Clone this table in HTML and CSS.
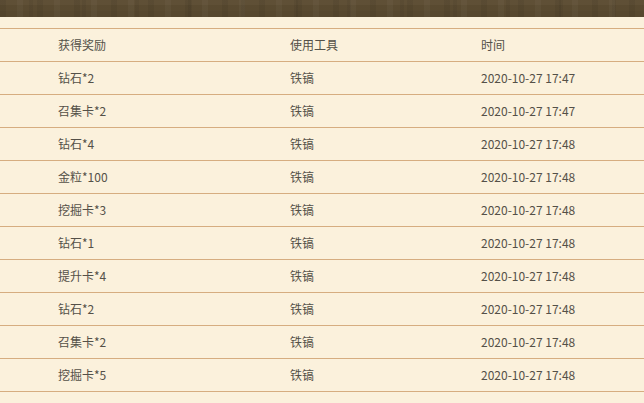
FILE: index.html
```html
<!DOCTYPE html>
<html lang="zh">
<head>
<meta charset="utf-8">
<link rel="stylesheet" href="styles.css">
</head>
<body>
<div class="banner"></div>
<div class="table">
  <div class="row head"><span>获得奖励</span><span>使用工具</span><span>时间</span></div>
  <div class="row"><span>钻石*2</span><span>铁镐</span><span>2020-10-27 17:47</span></div>
  <div class="row"><span>召集卡*2</span><span>铁镐</span><span>2020-10-27 17:47</span></div>
  <div class="row"><span>钻石*4</span><span>铁镐</span><span>2020-10-27 17:48</span></div>
  <div class="row"><span>金粒*100</span><span>铁镐</span><span>2020-10-27 17:48</span></div>
  <div class="row"><span>挖掘卡*3</span><span>铁镐</span><span>2020-10-27 17:48</span></div>
  <div class="row"><span>钻石*1</span><span>铁镐</span><span>2020-10-27 17:48</span></div>
  <div class="row"><span>提升卡*4</span><span>铁镐</span><span>2020-10-27 17:48</span></div>
  <div class="row"><span>钻石*2</span><span>铁镐</span><span>2020-10-27 17:48</span></div>
  <div class="row"><span>召集卡*2</span><span>铁镐</span><span>2020-10-27 17:48</span></div>
  <div class="row"><span>挖掘卡*5</span><span>铁镐</span><span>2020-10-27 17:48</span></div>
</div>
</body>
</html>
```
FILE: styles.css
```css
html, body {
  margin: 0;
  padding: 0;
  background: #fbf1dc;
  font-family: "Noto Sans CJK SC", "Microsoft YaHei", sans-serif;
  font-size: 12px;
  color: #545048;
}
.banner {
  height: 17px;
  background-color: #5c4c32;
  background-image:
    repeating-linear-gradient(90deg, rgba(0,0,0,0.06) 0 6px, transparent 6px 17px, rgba(255,255,255,0.03) 17px 23px, transparent 23px 37px),
    repeating-linear-gradient(90deg, transparent 0 29px, rgba(0,0,0,0.05) 29px 33px, transparent 33px 53px),
    linear-gradient(180deg, rgba(255,255,255,0.02) 0 5px, rgba(0,0,0,0.03) 5px 11px, rgba(0,0,0,0.06) 11px 17px);
}
.table {
  margin-top: 11px;
  border-top: 1px solid #d6ad80;
}
.row {
  display: grid;
  grid-template-columns: 58px 232px 191px 1fr;
  height: 32px;
  align-items: center;
  border-bottom: 1px solid #d6ad80;
}
.row span:first-child {
  grid-column: 2;
}
.row span {
  line-height: 16px;
}
```
